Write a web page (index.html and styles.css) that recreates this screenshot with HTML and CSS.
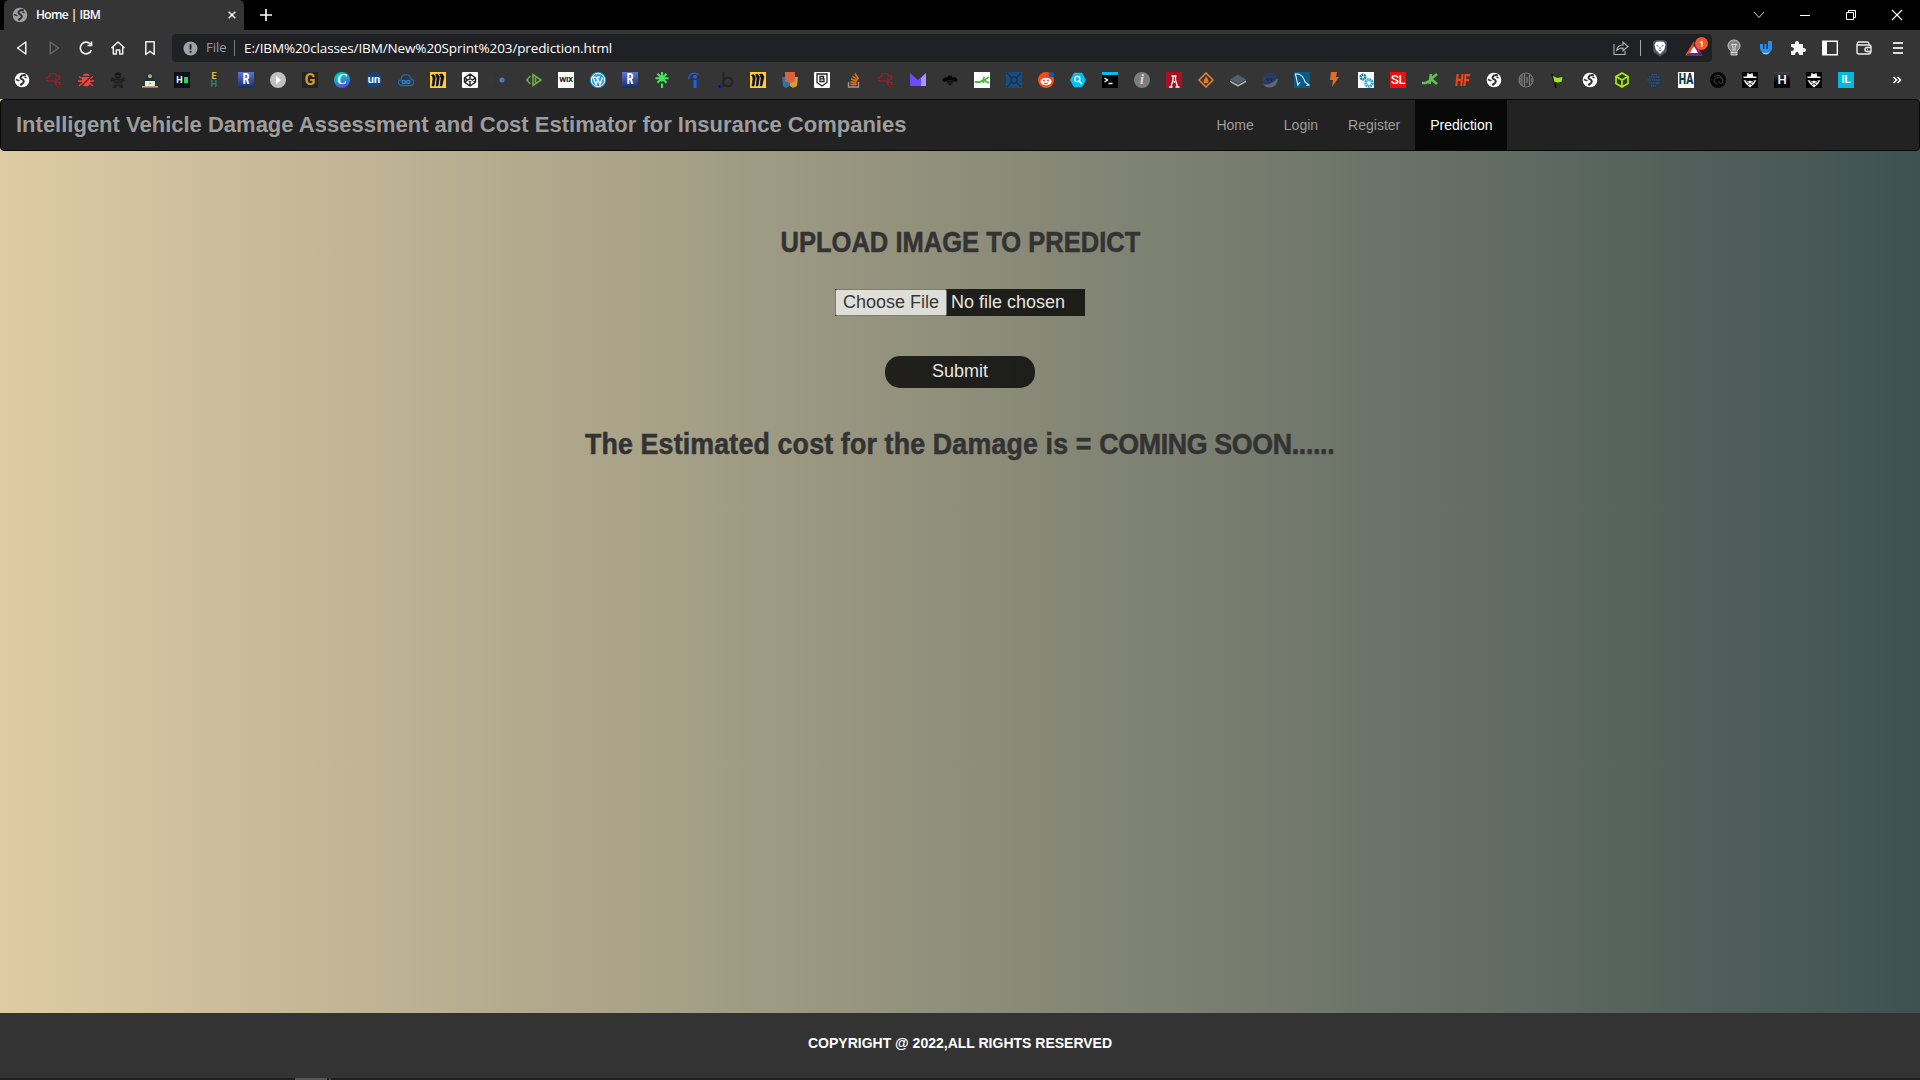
FILE: index.html
```html
<!DOCTYPE html>
<html lang="en">
<head>
<meta charset="utf-8">
<title>Home | IBM</title>
<link rel="stylesheet" href="styles.css">
</head>
<body>
<svg class="defs" aria-hidden="true">
  <symbol id="globe" viewBox="0 0 16 16"><circle cx="8" cy="8" r="7.300" fill="currentColor"/><path d="M11.800 3.200C8.500 2.800 6.300 4 6.500 5.800S10 7.300 9.800 9.300 8 11.500 6.300 13.200" fill="none" stroke="#303030" stroke-width="2"/><path d="M2 7.500l3.500 1.300M10.500 5l2 .8" stroke="#303030" stroke-width="1.400"/></symbol>
  <symbol id="redcloud" viewBox="0 0 16 16"><path d="M7 9H2.500C-.5 8 .5 4.500 3 5c.5-4.500 6.500-5 7.500-1 2.500-.7 4 1 3 3H9M7 9h5M9 12h2M13 12h2M11 15h2M14 15h1.500M9 10.500h5" fill="none" stroke="#b01a1c" stroke-width="1.100"/></symbol>
  <symbol id="bug" viewBox="0 0 16 16"><path d="M4.500 3.800a3.600 3 0 0 1 7 0zM4 5h8v6.500c-1 4-7 4-8 0z" fill="#f9403a"/><path d="M4 6.500L1 4.500M4 9H0M4 11.500L1 14M12 6.500l3-2M12 9h4M12 11.500l3 2.500" stroke="#f9403a" stroke-width="1.500"/><path d="M4 13.500L12.500 5" stroke="#353535" stroke-width="1.200"/></symbol>
  <symbol id="ninja" viewBox="0 0 16 16"><circle cx="8" cy="3.500" r="3.200" fill="#181818"/><path d="M5 7h6l3-2 1 4-3 1v3l2 3h-4l-2-3-2 3H2l2-3v-3L1 9l1-4z" fill="#202020"/><path d="M5.500 4h5M5 9h6M4 12h8" stroke="#353535"/></symbol>
  <symbol id="hacker" viewBox="0 0 16 16"><path d="M8 0C4.500 1 4.500 5 4 7l-2 5h12l-2-5C11.500 5 11.500 1 8 0z" fill="#17383e"/><circle cx="8" cy="4.200" r="1.900" fill="#d9a674"/><path d="M3 9h10v5H3z" fill="#f2ead3"/><path d="M0 14h16v1.600H0z" fill="#b9a98c"/><circle cx="8" cy="11.500" r=".8" fill="#777"/></symbol>
  <symbol id="play" viewBox="0 0 16 16"><circle cx="8" cy="8" r="8" fill="#c0c0c0"/><path d="M6 3.500v9L11 8z" fill="#fff"/></symbol>
  <symbol id="loopcloud" viewBox="0 0 16 16"><path d="M3 13.500C-1 12 .5 7.500 3 8c0-6 8-8 10-1 4 1 3.500 6 0 6.500z" fill="none" stroke="#1c6cad" stroke-width="1.300"/><path d="M8 10c-1-2-4-2-4 0s3 2 4 0 4-2 4 0-3 2-4 0z" fill="none" stroke="#2b87cf" stroke-width="1.300"/></symbol>
  <symbol id="miro" viewBox="0 0 16 16"><path d="M0 0h16v16H0z" fill="#ffd02f"/><path d="M1.500 3l2-.5L5.500 5 4 14H2l1-8zM5.500 2.500l2-.5 2 3L8 14H6l1-8zM9.500 2h3L14 5l-2 9h-2l1-8z" fill="#0b0b35" stroke="#0b0b35" stroke-width=".5"/></symbol>
  <symbol id="codepen" viewBox="0 0 16 16"><rect width="16" height="16" rx="1" fill="#fff"/><path d="M8 2l5.500 3.800v4.400L8 14l-5.500-3.800V5.800zM2.500 5.800L8 9.500l5.500-3.700M2.500 10.200L8 6.500l5.500 3.700M8 2v4.500M8 14V9.500" fill="none" stroke="#222" stroke-width="1.400"/></symbol>
  <symbol id="bluedot" viewBox="0 0 16 16"><circle cx="8" cy="8" r="2.500" fill="#4c79c1"/><path d="M1 1l3 3M12 4l3-3M1 15l3-3M12 12l3 3" stroke="#2b3140" stroke-width="1.500"/></symbol>
  <symbol id="codeplay" viewBox="0 0 16 16"><path d="M4.500 4L.8 8l3.700 4M7 2.500v11L15 8zM9.500 5.500v5" fill="none" stroke="#6fae45" stroke-width="1.600"/></symbol>
  <symbol id="wordpress" viewBox="0 0 16 16"><circle cx="8" cy="8" r="8" fill="#2e9fd3"/><circle cx="8" cy="8" r="6.600" fill="none" stroke="#fff"/><path d="M3 5.500l3 7 2-5 2 5 2.500-7M6 5l2 4M2.500 5.200h3M7 5.200h3" fill="none" stroke="#fff" stroke-width="1.300"/></symbol>
  <symbol id="linktree" viewBox="0 0 16 16"><path d="M8 0v9.500M1.500 6.300h13M3.500 1.800l9 9M12.500 1.800l-9 9M8 11.500V16" stroke="#42e55c" stroke-width="2.100"/></symbol>
  <symbol id="indeed" viewBox="0 0 16 16"><circle cx="9" cy="4.800" r="2" fill="#1761f5"/><path d="M9 8V16" stroke="#1761f5" stroke-width="3.200"/><path d="M2.500 7C3 1.500 8-.5 12.500 2.500" fill="none" stroke="#1761f5" stroke-width="1.300"/></symbol>
  <symbol id="dotb" viewBox="0 0 16 16"><circle cx="1.700" cy="14.500" r="1.500" fill="#0000fa"/><path d="M5.500 0v15" stroke="#222528" stroke-width="2"/><circle cx="10" cy="10" r="4.400" fill="none" stroke="#222528" stroke-width="2"/></symbol>
  <symbol id="shields" viewBox="0 0 16 16"><path d="M0 5h8v9l-4 2-3-2z" fill="#2b75a5"/><path d="M8 5h8l-1 9-4 2-3-2z" fill="#d89a31"/><path d="M3 0h10v9l-5 2-5-2z" fill="#d9623f"/></symbol>
  <symbol id="bshield" viewBox="0 0 16 16"><rect width="16" height="16" rx="1" fill="#fff"/><path d="M3 2h10v8.500L8 14l-5-3.500z" fill="none" stroke="#222" stroke-width="1.300"/><path d="M6 4.500h3.500v2.300H6zM6 6.800h4v2.700H6z" fill="none" stroke="#222" stroke-width="1.300"/></symbol>
  <symbol id="stack" viewBox="0 0 16 16"><path d="M2.500 10v5h10v-5" fill="none" stroke="#999" stroke-width="1.300"/><path d="M4.500 12.500h6M4.500 10l6 .8M5 7l6 2.200M6.500 4l5 4M9 1.500l3.500 5.500" stroke="#e87922" stroke-width="1.400"/></symbol>
  <symbol id="purple" viewBox="0 0 16 16"><path d="M0 1l8 7 8-7v13H0z" fill="#6d4aff"/><path d="M11 6l5-5v13h-5z" fill="#a995ff"/></symbol>
  <symbol id="bee" viewBox="0 0 16 16"><path d="M6 3.500h4l.3 2C13 4.500 16 6 15.500 9c-1.500 1-3.500 1-4.500 0l-1 3-2 1.500L6 12 5 9c-1 1-3 1-4.500 0C0 6 3 4.500 5.700 5.500z" fill="#070707"/><path d="M5.500 8.800h5M6 11h4" stroke="#353535" stroke-width=".8"/></symbol>
  <symbol id="kwhite" viewBox="0 0 16 16"><path d="M0 0h16v16H0z" fill="#fff"/><path d="M1 10h5l3-2M10 5l-1 6M15 5l-5 3.300 5 2.700" fill="none" stroke="#4abb3f" stroke-width="1.800"/></symbol>
  <symbol id="bluex" viewBox="0 0 16 16"><path d="M0 0h16v16H0z" fill="#174c80"/><path d="M1 1l14 14M15 1L1 15" stroke="#252d3b" stroke-width="1.100"/><circle cx="8" cy="8" r="3.200" fill="#174c80" stroke="#252d3b" stroke-width="1.300"/></symbol>
  <symbol id="reddit" viewBox="0 0 16 16"><circle cx="8" cy="8" r="8" fill="#ff4a16"/><ellipse cx="8" cy="9.500" rx="5.500" ry="3.800" fill="#fff"/><circle cx="6" cy="8.500" r="1" fill="#ff4a16"/><circle cx="10" cy="8.500" r="1" fill="#ff4a16"/><path d="M6 11q2 1.500 4 0M8 6l1-3" fill="none" stroke="#d33"/><circle cx="13.300" cy="2.700" r="2.700" fill="#1b5b94"/></symbol>
  <symbol id="hexsearch" viewBox="0 0 16 16"><path d="M4 .8h8L16 8l-4 7.200H4L0 8z" fill="#00c1f5"/><circle cx="7.300" cy="7" r="2.600" fill="none" stroke="#fff" stroke-width="1.300"/><path d="M9 9l3 3" stroke="#fff" stroke-width="1.600"/></symbol>
  <symbol id="terminal" viewBox="0 0 16 16"><path d="M0 0h16v16H0z" fill="#000"/><path d="M0 0h16v3H0z" fill="#00bdf5"/><path d="M2.500 6l3 2-3 2M6.500 11.500h4" fill="none" stroke="#fff" stroke-width="1.400"/></symbol>
  <symbol id="redflask" viewBox="0 0 16 16"><path d="M0 0h16v16H0z" fill="#a90f21"/><path d="M5.500 4h5M7 4v4l-2 7M9.500 4v4l2 7M3 15h3.500M9.500 15h4M8.300 9v2" fill="none" stroke="#fff" stroke-width="1.300"/></symbol>
  <symbol id="diamond" viewBox="0 0 16 16"><path d="M8 1l7 7-7 7-7-7z" fill="none" stroke="#ed852f" stroke-width="1.500"/><path d="M8 3.500c0 2 3 3.500 2.500 6S5.500 12 5.500 9.500 8 6 8 3.500z" fill="#e57a23"/></symbol>
  <symbol id="layers" viewBox="0 0 16 16"><path d="M0 8.500L8 13l8-4.500V10l-8 4.500L0 10z" fill="#c4c8ca"/><path d="M0 7.500L8 2.500l8 5L8 12z" fill="#52616f"/></symbol>
  <symbol id="navy" viewBox="0 0 16 16"><circle cx="8" cy="8" r="7.500" fill="#273c66"/><path d="M1 12C7 14 13 10 15.500 6c1 10-11 12-14.500 6z" fill="#65686c"/><path d="M4 8l2-2v3l3-3v3l3-3" fill="none" stroke="#18284d"/></symbol>
  <symbol id="dolphin" viewBox="0 0 16 16"><path d="M0 0h16v16H0z" fill="#075b87"/><path d="M1 2c6-1 9 4 10 8l4 3-3 .5M1 2c2 3 1 5 2 7l1 4 2-3" fill="none" stroke="#d5e5ed" stroke-width="1.200"/></symbol>
  <symbol id="bolt" viewBox="0 0 16 16"><path d="M5 0h6l-1 5h3L6 15l1-7H4z" fill="#e36d1f"/></symbol>
  <symbol id="gears" viewBox="0 0 16 16"><path d="M0 0h16v16H0z" fill="#f7fbfc"/><circle cx="5" cy="5" r="2.300" fill="none" stroke="#137ba5" stroke-width="2.500" stroke-dasharray="1.600 .5"/><circle cx="11" cy="11" r="3.300" fill="none" stroke="#30a6d2" stroke-width="3" stroke-dasharray="1.700 .5"/></symbol>
  <symbol id="kgreen" viewBox="0 0 16 16"><path d="M0 11h4l3-2M9 2L7.500 12M15 2L9 7l6 5" fill="none" stroke="#5ec64f" stroke-width="2.600"/></symbol>
  <symbol id="grayglobe" viewBox="0 0 16 16"><circle cx="8" cy="8" r="7" fill="none" stroke="#777" stroke-width="1.200"/><path d="M4 3v10M6.500 2v12M9 5v6M11.500 3v10M2 6v4M14 6v4" stroke="#818181" stroke-width="1.200"/></symbol>
  <symbol id="flag" viewBox="0 0 16 16"><path d="M2 2l4 14" stroke="#111" stroke-width="1.500"/><path d="M2.500 3.500l5 2 5.500-1-1 5.500-4 1-4-1z" fill="#a5e51e" stroke="#17200b" stroke-width=".7"/></symbol>
  <symbol id="cube" viewBox="0 0 16 16"><path d="M8 1l6 3.500v7L8 15l-6-3.500v-7zM2 4.500L8 8l6-3.500M8 8v7" fill="none" stroke="#9fef00" stroke-width="1.700"/></symbol>
  <symbol id="dots" viewBox="0 0 16 16"><circle cx="8" cy="8" r="7.500" fill="#253852"/><path d="M3 5h10M1.500 8h13M3 11h10M6 2.500h5M5 14h5" stroke="#4b6077" stroke-width="1.100" stroke-dasharray="1.200 1"/></symbol>
  <symbol id="swirl" viewBox="0 0 16 16"><circle cx="8" cy="8" r="8" fill="#050505"/><path d="M8 6c4-3 6 2 4 5M8 6c-5-1-5 5-1 6M11 7c1-4-4-5-7-2M9 9c0 4 4 3 4-1" fill="none" stroke="#444" stroke-width="1"/></symbol>
  <symbol id="spy" viewBox="0 0 16 16"><path d="M0 0h16v16H0z" fill="#000"/><path d="M5.500 1L8 2l2.500-1 .8 3.500h3.200V6h-13V4.500h3.200zM1.500 8l5 1.200L8 8.500l1.500.7L14.500 8 12 12l-4 3.500L4 12z" fill="#f4f4f4"/><path d="M4 9.500l2.500 1M12 9.500l-2.500 1M6 12.500l2-.8 2 .8" fill="none" stroke="#111"/></symbol>
</svg>

<header class="browser">
  <div class="tabstrip">
    <div class="tab">
      <svg class="i16 muted"><use href="#globe"/></svg>
      <span class="tab-title">Home | IBM</span>
      <svg class="tab-close" viewBox="0 0 8 8"><path d="M.7.7l6.600 6.600M7.300.7L.7 7.300" stroke="#fff" stroke-width="1.500"/></svg>
    </div>
    <svg class="plus" viewBox="0 0 12 12"><path d="M6 0v12M0 6h12" stroke="#fff" stroke-width="1.600"/></svg>
    <div class="window">
      <svg viewBox="0 0 12 12"><path d="M1 3l5 5.500L11 3" fill="none" stroke="#ddd"/></svg>
      <svg viewBox="0 0 12 12"><path d="M1 6.500h10" stroke="#fff"/></svg>
      <svg viewBox="0 0 12 12"><path d="M1.500 3.500h7v7h-7zM3.500 3.500v-2h7v7h-2" fill="none" stroke="#fff"/></svg>
      <svg viewBox="0 0 12 12"><path d="M1 1l10 10M11 1L1 11" stroke="#fff" stroke-width="1.100"/></svg>
    </div>
  </div>

  <div class="toolbar">
    <div class="controls">
      <svg viewBox="0 0 16 16"><path d="M11.800 2v12L3.500 8z" fill="none" stroke="#eee" stroke-width="1.500" stroke-linejoin="round"/></svg>
      <svg viewBox="0 0 16 16"><path d="M4.200 2v12l8.300-6z" fill="none" stroke="#6b6b70" stroke-width="1.300" stroke-linejoin="round"/></svg>
      <svg viewBox="0 0 16 16"><path d="M12.500 4.200A5.800 5.800 0 1 0 13.500 10M13.500 1.500v4h-4" fill="none" stroke="#eee" stroke-width="1.700"/></svg>
      <svg viewBox="0 0 16 16"><path d="M1.500 8L8 2l6.500 6M3.300 7v7h3v-4h3.400v4h3V7" fill="none" stroke="#eee" stroke-width="1.500" stroke-linejoin="round"/></svg>
      <svg viewBox="0 0 16 16"><path d="M3.800 1.700h8.400v12.800L8 11.300l-4.200 3.200z" fill="none" stroke="#eee" stroke-width="1.500" stroke-linejoin="round"/></svg>
    </div>
    <div class="address">
      <svg class="info" viewBox="0 0 16 16"><circle cx="8" cy="8" r="7.500" fill="#a0a2a7"/><path d="M8 3.500v5.500M8 10.500v2" stroke="#202124" stroke-width="2"/></svg>
      <span class="scheme">File</span>
      <span class="url">E:/IBM%20classes/IBM/New%20Sprint%203/prediction.html</span>
      <svg class="share" viewBox="0 0 16 16"><path d="M1 4v10.500h11V11M3.500 11c.5-4 3-6 6.500-6V2.200l5 4.300-5 4.200V8c-3 0-5 .8-6.500 3z" fill="none" stroke="#b2b2b4" stroke-width="1.100"/></svg>
      <span class="divider"></span>
      <svg class="brave" viewBox="0 0 16 18"><path d="M1 3l3-2h8l3 2-.5 10L8 17.500 1.500 13z" fill="#54566a"/><path d="M4 3l4-.5 4 .5 1.500 3-1.500 5-4 4-4-4-1.500-5z" fill="#fff"/><path d="M4.500 6.500l2 .8M11.500 6.500l-2 .8M8 8v2.500M6.500 11l1.500 1 1.500-1" fill="none" stroke="#54566a" stroke-width=".9"/></svg>
      <div class="bat"><svg viewBox="0 0 20 17"><path d="M10 1L1 16l8-5z" fill="#ff4724"/><path d="M10 1l9 15-7-5z" fill="#9e1f63"/><path d="M1 16h18l-7-4H8z" fill="#662d91"/><path d="M10 6l4 7H6z" fill="#fff"/></svg><b>1</b></div>
    </div>
    <div class="extensions">
      <svg viewBox="0 0 16 16"><path d="M5 11C-1 6 3 0 8 0s9 6 3 11v4H5z" fill="#858585" stroke="#ccc"/><path d="M7 11V7L5.500 4.500h5L9 7v4M5 12.500h6" fill="none" stroke="#ddd"/></svg>
      <svg viewBox="0 0 16 16"><path d="M2 4h3v5h1.500V4h2v5H10V1h4v7c0 7-12 7-12 0z" fill="#2490eb"/><path d="M4 11.500c2 2 6 2 8 0-1 4-7 4-8 0z" fill="#a5daf8"/></svg>
      <svg viewBox="0 0 16 16"><path d="M1 4h4C4 0 10 0 9 4h4v4c4-1 4 5 0 4v3H9c0-4-4-4-4 0H1v-4c4 0 4-4 0-4z" fill="#f5f5f5"/></svg>
      <svg viewBox="0 0 16 16"><path d="M.7 1.200h14.600v13.600H.7z" fill="none" stroke="#fff" stroke-width="1.400"/><path d="M.5 1H5v14H.5z" fill="#fff"/></svg>
      <svg viewBox="0 0 16 16"><path d="M1 4v8c0 1 .7 2 2 2h9c2 0 3-1 3-3V7c0-1.500-1-2-2-2H2c-1-1-1-3 1-3h8c2 0 2 1 2 3M15 7.500h-4a2 2 0 0 0 0 4h4M11 9.500h1" fill="none" stroke="#eee" stroke-width="1.400"/></svg>
      <svg viewBox="0 0 16 16"><path d="M3 3h10M3 8h10M3 13h10" stroke="#ddd" stroke-width="2"/></svg>
    </div>
  </div>

  <nav class="bookmarks">
    <svg><use href="#globe"/></svg>
    <svg><use href="#redcloud"/></svg>
    <svg><use href="#bug"/></svg>
    <svg><use href="#ninja"/></svg>
    <svg><use href="#hacker"/></svg>
    <span class="fav hg">H<i></i></span>
    <span class="fav eh"><em>E</em>H</span>
    <span class="fav rr"><b>R</b></span>
    <svg><use href="#play"/></svg>
    <span class="fav gg">G</span>
    <span class="fav canva">C</span>
    <span class="fav un">un</span>
    <svg><use href="#loopcloud"/></svg>
    <svg><use href="#miro"/></svg>
    <svg><use href="#codepen"/></svg>
    <svg><use href="#bluedot"/></svg>
    <svg><use href="#codeplay"/></svg>
    <span class="fav wix">WIX</span>
    <svg><use href="#wordpress"/></svg>
    <span class="fav rr"><b>R</b></span>
    <svg><use href="#linktree"/></svg>
    <svg><use href="#indeed"/></svg>
    <svg><use href="#dotb"/></svg>
    <svg><use href="#miro"/></svg>
    <svg><use href="#shields"/></svg>
    <svg><use href="#bshield"/></svg>
    <svg><use href="#stack"/></svg>
    <svg><use href="#redcloud"/></svg>
    <svg><use href="#purple"/></svg>
    <svg><use href="#bee"/></svg>
    <svg><use href="#kwhite"/></svg>
    <svg><use href="#bluex"/></svg>
    <svg><use href="#reddit"/></svg>
    <svg><use href="#hexsearch"/></svg>
    <svg><use href="#terminal"/></svg>
    <span class="fav ii">i</span>
    <svg><use href="#redflask"/></svg>
    <svg><use href="#diamond"/></svg>
    <svg><use href="#layers"/></svg>
    <svg><use href="#navy"/></svg>
    <svg><use href="#dolphin"/></svg>
    <svg><use href="#bolt"/></svg>
    <svg><use href="#gears"/></svg>
    <span class="fav sl">SL</span>
    <svg><use href="#kgreen"/></svg>
    <span class="fav hf"><b>HF</b></span>
    <svg><use href="#globe"/></svg>
    <svg><use href="#grayglobe"/></svg>
    <svg><use href="#flag"/></svg>
    <svg><use href="#globe"/></svg>
    <svg><use href="#cube"/></svg>
    <svg><use href="#dots"/></svg>
    <span class="fav ha"><b>HA</b></span>
    <svg><use href="#swirl"/></svg>
    <svg><use href="#spy"/></svg>
    <span class="fav hh">H</span>
    <svg><use href="#spy"/></svg>
    <span class="fav il">IL</span>
    <svg class="more" viewBox="0 0 16 16"><path d="M4.500 5l3 3-3 3M8.500 5l3 3-3 3" fill="none" stroke="#fff" stroke-width="1.600"/></svg>
  </nav>
</header>

<main class="page">
  <nav class="navbar">
    <a class="brand">Intelligent Vehicle Damage Assessment and Cost Estimator for Insurance Companies</a>
    <div class="links"><a>Home</a><a>Login</a><a>Register</a><a class="active">Prediction</a></div>
  </nav>
  <section class="content">
    <h2 class="upload">UPLOAD IMAGE TO PREDICT</h2>
    <div class="file"><button class="choose">Choose File</button><span class="chosen">No file chosen</span></div>
    <button class="submit">Submit</button>
    <h2 class="estimate">The Estimated cost for the Damage is = <span class="soon">COMING SOON......</span></h2>
  </section>
</main>
<footer class="footer"><p>COPYRIGHT @ 2022,ALL RIGHTS RESERVED</p></footer>
<div class="taskbar"><span></span><i></i></div>
</body>
</html>
```
FILE: styles.css
```css
* { box-sizing: border-box; }
body { margin: 0; height: 1080px; display: flex; flex-direction: column; overflow: hidden; font-family: "Liberation Sans", Arial, sans-serif; background: linear-gradient(to right, #decba4, #3e5151); }
svg { display: block; flex: none; overflow: visible; }
.defs { position: absolute; width: 0; height: 0; }
button { font: inherit; border: 0; padding: 0; margin: 0; }

.browser { height: 99px; background: #353535; color: #fff; font-family: "Open Sans", "Noto Sans", sans-serif; }
.tabstrip { height: 30px; background: #000; display: flex; align-items: center; padding-left: 4px; }
.tab { width: 240px; height: 30px; background: #353535; border-radius: 5px 5px 0 0; display: flex; align-items: center; padding: 0 8px; }
.i16 { width: 16px; height: 16px; }
.muted { color: #9da0a5; }
.tab-title { flex: 1; margin-left: 8px; font-size: 12px; font-weight: 600; letter-spacing: -.65px; word-spacing: .3px; line-height: 16px; }
.tab-close { width: 8px; height: 8px; }
.plus { width: 12px; height: 12px; margin-left: 16px; }
.window { margin-left: auto; margin-right: 17px; display: flex; gap: 34px; }
.window svg { width: 12px; height: 12px; }

.toolbar { height: 36px; display: flex; align-items: center; padding-left: 14px; }
.controls { display: flex; gap: 16px; margin-right: 14px; }
.controls svg { width: 16px; height: 16px; }
.address { width: 1540px; height: 28px; border-radius: 4px; background: #202124; display: flex; align-items: center; padding: 0 4px 0 11px; }
.info { width: 15px; height: 15px; }
.scheme { margin-left: 8px; width: 29px; height: 16px; line-height: 15px; border-right: 1px solid #77797c; font-size: 13px; color: #9b9da1; }
.url { flex: 1; margin-left: 9px; font-size: 13.500px; letter-spacing: -.12px; white-space: nowrap; }
.share { width: 16px; height: 16px; }
.divider { width: 1px; height: 16px; margin: 0 11px; background: #a5a5a5; }
.brave { width: 16px; height: 18px; }
.bat { margin-left: 16px; width: 24px; height: 20px; position: relative; }
.bat svg { width: 20px; height: 17px; margin-top: 2px; }
.bat b { position: absolute; right: 0; top: -1px; width: 13px; height: 13px; border-radius: 50%; background: #fb542b; font-size: 8px; line-height: 13px; text-align: center; }
.extensions { display: flex; gap: 16px; margin-left: 14px; }
.extensions svg { width: 16px; height: 16px; }
.extensions svg:nth-child(n+5) { margin-left: 2px; }

.bookmarks { height: 32px; display: flex; align-items: center; gap: 16px; padding: 0 15px 5px 14px; }
.bookmarks svg { width: 16px; height: 16px; }
.bookmarks .more { margin-left: auto; }
.fav { width: 16px; height: 16px; flex: none; display: flex; align-items: center; justify-content: center; font: bold 13px/16px Roboto, sans-serif; color: #fff; }
.hg { background: #07131b; font-size: 9px; gap: 1px; }
.hg i { width: 4px; height: 6px; background: #00e66b; }
.eh { flex-direction: column; font-size: 9px; line-height: 8px; color: #23808c; }
.eh em { font-style: normal; color: #eebc32; }
.rr { background: linear-gradient(#5d78cf, #19286b); }
.rr b { transform: scale(.8, 1.1); }
.gg { background: #242424; color: #cf9c20; font-size: 16px; }
.canva { border-radius: 50%; background: linear-gradient(160deg, #00c4cc 30%, #7428e8); font: italic bold 14px/16px "Liberation Serif", serif; }
.un { border-radius: 50%; background: #17427b; font-size: 11px; }
.wix { background: #fff; color: #111; font-size: 8px; letter-spacing: -.3px; }
.ii { border-radius: 50%; background: #7d7d7d; color: #ddd; font: italic bold 14px/16px "Liberation Serif", serif; }
.sl { background: #f50b0b; font-size: 13px; font-weight: 500; letter-spacing: -.5px; }
.hf { color: #ef4614; font-style: italic; font-size: 15px; }
.hf b { transform: scale(.78, 1.15); }
.ha { background: #fff; color: #103949; }
.ha b { transform: scale(.8, 1.1); }
.hh { background: linear-gradient(#454545, #050505 60%); font-weight: 500; }
.il { background: #03b9dc; font-size: 11px; }

.page { flex: 1; }
.navbar { height: 52px; background: #222; border: 1px solid #080808; border-radius: 4px; display: flex; justify-content: space-between; padding: 0 412px 0 15px; }
.brand { font-size: 22px; line-height: 50px; font-weight: bold; color: #9d9d9d; white-space: nowrap; }
.links { display: flex; }
.links a { padding: 0 14.500px 0 15.500px; font-size: 14px; line-height: 50px; color: #9d9d9d; }
.links .active { background: #080808; color: #fff; }

.content { display: flex; flex-direction: column; align-items: center; color: #333; }
h2 { margin: 0; font-size: 30px; line-height: 34px; white-space: nowrap; -webkit-text-stroke: .6px #333; }
.upload { margin-top: 74px; transform: scaleX(.851); }
.file { width: 250px; height: 27px; margin-top: 30px; display: flex; background: #000; opacity: .78; font-size: 18px; line-height: 26px; }
.choose { width: 112px; height: 27px; background: #f4f4f4; color: #1c1c1c; border: 1px solid #767676; border-radius: 2px; line-height: 24px; padding-bottom: 1px; }
.chosen { color: #fff; margin-left: 4px; }
.submit { width: 150px; height: 32px; margin-top: 40px; border-radius: 15px; background: #000; color: #fff; opacity: .78; font-size: 18px; line-height: 30px; padding-bottom: 2px; }
.estimate { margin-top: 39px; transform: scaleX(.893); letter-spacing: .17px; }
.soon { letter-spacing: -.4px; }

.footer { height: 65px; background: #333; color: #fff; text-align: center; }
.footer p { margin: 0; padding-top: 22px; font-size: 14px; line-height: 16px; font-weight: bold; }
.taskbar { height: 2px; background: #202020; display: flex; gap: 2px; padding-left: 295px; }
.taskbar span { width: 32px; background: #555; }
.taskbar i { width: 2px; background: #444; }
```
